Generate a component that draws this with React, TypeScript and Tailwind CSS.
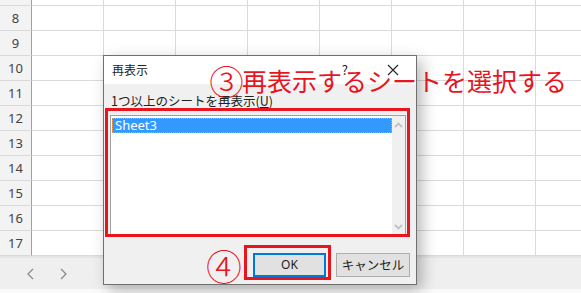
import React from "react";

const rows = [8, 9, 10, 11, 12, 13, 14, 15, 16, 17];
const cols = [0, 1, 2, 3, 4, 5, 6, 7];

export default function App() {
  return (
    <div className="relative w-[581px] h-[293px] overflow-hidden bg-white font-['Noto_Sans','Noto_Sans_CJK_JP',sans-serif]">
      <div className="flex flex-col">
        <div className="flex h-[6px]">
          <div className="w-[32px] shrink-0 border-r border-b border-r-[#9f9f9f] border-b-[#d9d9d9] bg-[#f3f3f3]" />
          {cols.map((c) => (
            <div key={c} className="w-[72px] shrink-0 border-r border-b border-[#dadada]" />
          ))}
        </div>
        {rows.map((r) => (
          <div key={r} className="flex h-[25px]">
            <div className="w-[32px] shrink-0 border-r border-b border-r-[#9f9f9f] border-b-[#d9d9d9] bg-[#f3f3f3] text-[13px] leading-[24px] text-center text-[#444]">
              {r}
            </div>
            {cols.map((c) => (
              <div key={c} className="w-[72px] shrink-0 border-r border-b border-[#dadada]" />
            ))}
          </div>
        ))}
        <div className="h-[33px] bg-[#efefef] border-t-2 border-[#e4e4e4] flex items-center gap-[20px] pl-[25px] text-[#8a8a8a]">
          <svg width="12" height="14" viewBox="0 0 12 14">
            <path d="M8 2 L3 7 L8 12" fill="none" stroke="#8a8a8a" strokeWidth="1.3" />
          </svg>
          <svg width="12" height="14" viewBox="0 0 12 14">
            <path d="M4 2 L9 7 L4 12" fill="none" stroke="#8a8a8a" strokeWidth="1.3" />
          </svg>
        </div>
        <div className="h-[4px] bg-[#fafafa]" />
      </div>

      {/* Dialog */}
      <div className="absolute left-[103px] top-[55px] w-[314px] h-[230px] border border-[#707070] bg-[#f0f0f0] shadow-[5px_5px_14px_rgba(0,0,0,0.28)] flex flex-col font-['Noto_Sans_CJK_JP',sans-serif] text-[12px] text-[#222]">
        <div className="h-[28px] bg-white flex items-center pl-[8px] pr-[17px]">
          <span className="flex-1">再表示</span>
          <span className="mr-[39px] text-[13px]">?</span>
          <svg width="12" height="12" viewBox="0 0 12 12">
            <path d="M1 1 L11 11 M11 1 L1 11" stroke="#222" strokeWidth="1.1" />
          </svg>
        </div>
        <div className="flex flex-col px-[6px] pt-[9px]">
          <div className="pl-[1px] leading-[16px] text-[12.5px]">
            1つ以上のシートを再表示(<span className="underline">U</span>)
          </div>
          <div className="mt-[6px] ml-[0px] w-[296px] h-[122px] border border-[#a0a0a0] bg-white flex">
            <div className="flex-1 pt-[2px] pl-[1px]">
              <div className="h-[15px] border border-dotted border-[#f0a050] bg-[#3399ff] text-white text-[13px] leading-[13px] pl-[2px] font-['Noto_Sans',sans-serif]">
                Sheet3
              </div>
            </div>
            <div className="w-[13px] bg-[#f0f0f0] flex flex-col justify-between items-center py-[6px]">
              <svg width="9" height="6" viewBox="0 0 9 6">
                <path d="M1 5 L4.5 1.5 L8 5" fill="none" stroke="#c2c2c2" strokeWidth="1.8" />
              </svg>
              <svg width="9" height="6" viewBox="0 0 9 6">
                <path d="M1 1 L4.5 4.5 L8 1" fill="none" stroke="#c2c2c2" strokeWidth="1.8" />
              </svg>
            </div>
          </div>
          <div className="mt-[16px] flex justify-end gap-[10px] pr-[0px]">
            <div className="w-[73px] h-[24px] border-2 border-[#0078d7] bg-[#e1e1e1] flex items-center justify-center font-['Noto_Sans',sans-serif]">
              OK
            </div>
            <div className="w-[74px] h-[24px] border border-[#adadad] bg-[#e1e1e1] flex items-center justify-center text-[12.5px]">
              キャンセル
            </div>
          </div>
        </div>
      </div>

      {/* Annotations */}
      <div className="absolute left-[105px] top-[108px] w-[305px] h-[129px] border-[3px] border-[#e8141e]" />
      <div className="absolute left-[244px] top-[245px] w-[87px] h-[35px] border-[3px] border-[#e8141e]" />
      <div className="absolute left-[212px] top-[68px] text-[25px] leading-[25px] text-[#e8141e] whitespace-nowrap font-['Noto_Sans_CJK_JP',sans-serif] flex items-center">
        <span className="inline-block scale-[1.38] font-light ml-[2px] mr-[3px]">③</span>
        <span>再表示するシートを選択する</span>
      </div>
      <div className="absolute left-[209px] top-[253px] text-[26px] leading-[26px] text-[#e8141e] font-['Noto_Sans_CJK_JP',sans-serif]">
        <span className="inline-block scale-[1.38] font-light ml-[2px]">④</span>
      </div>
    </div>
  );
}
